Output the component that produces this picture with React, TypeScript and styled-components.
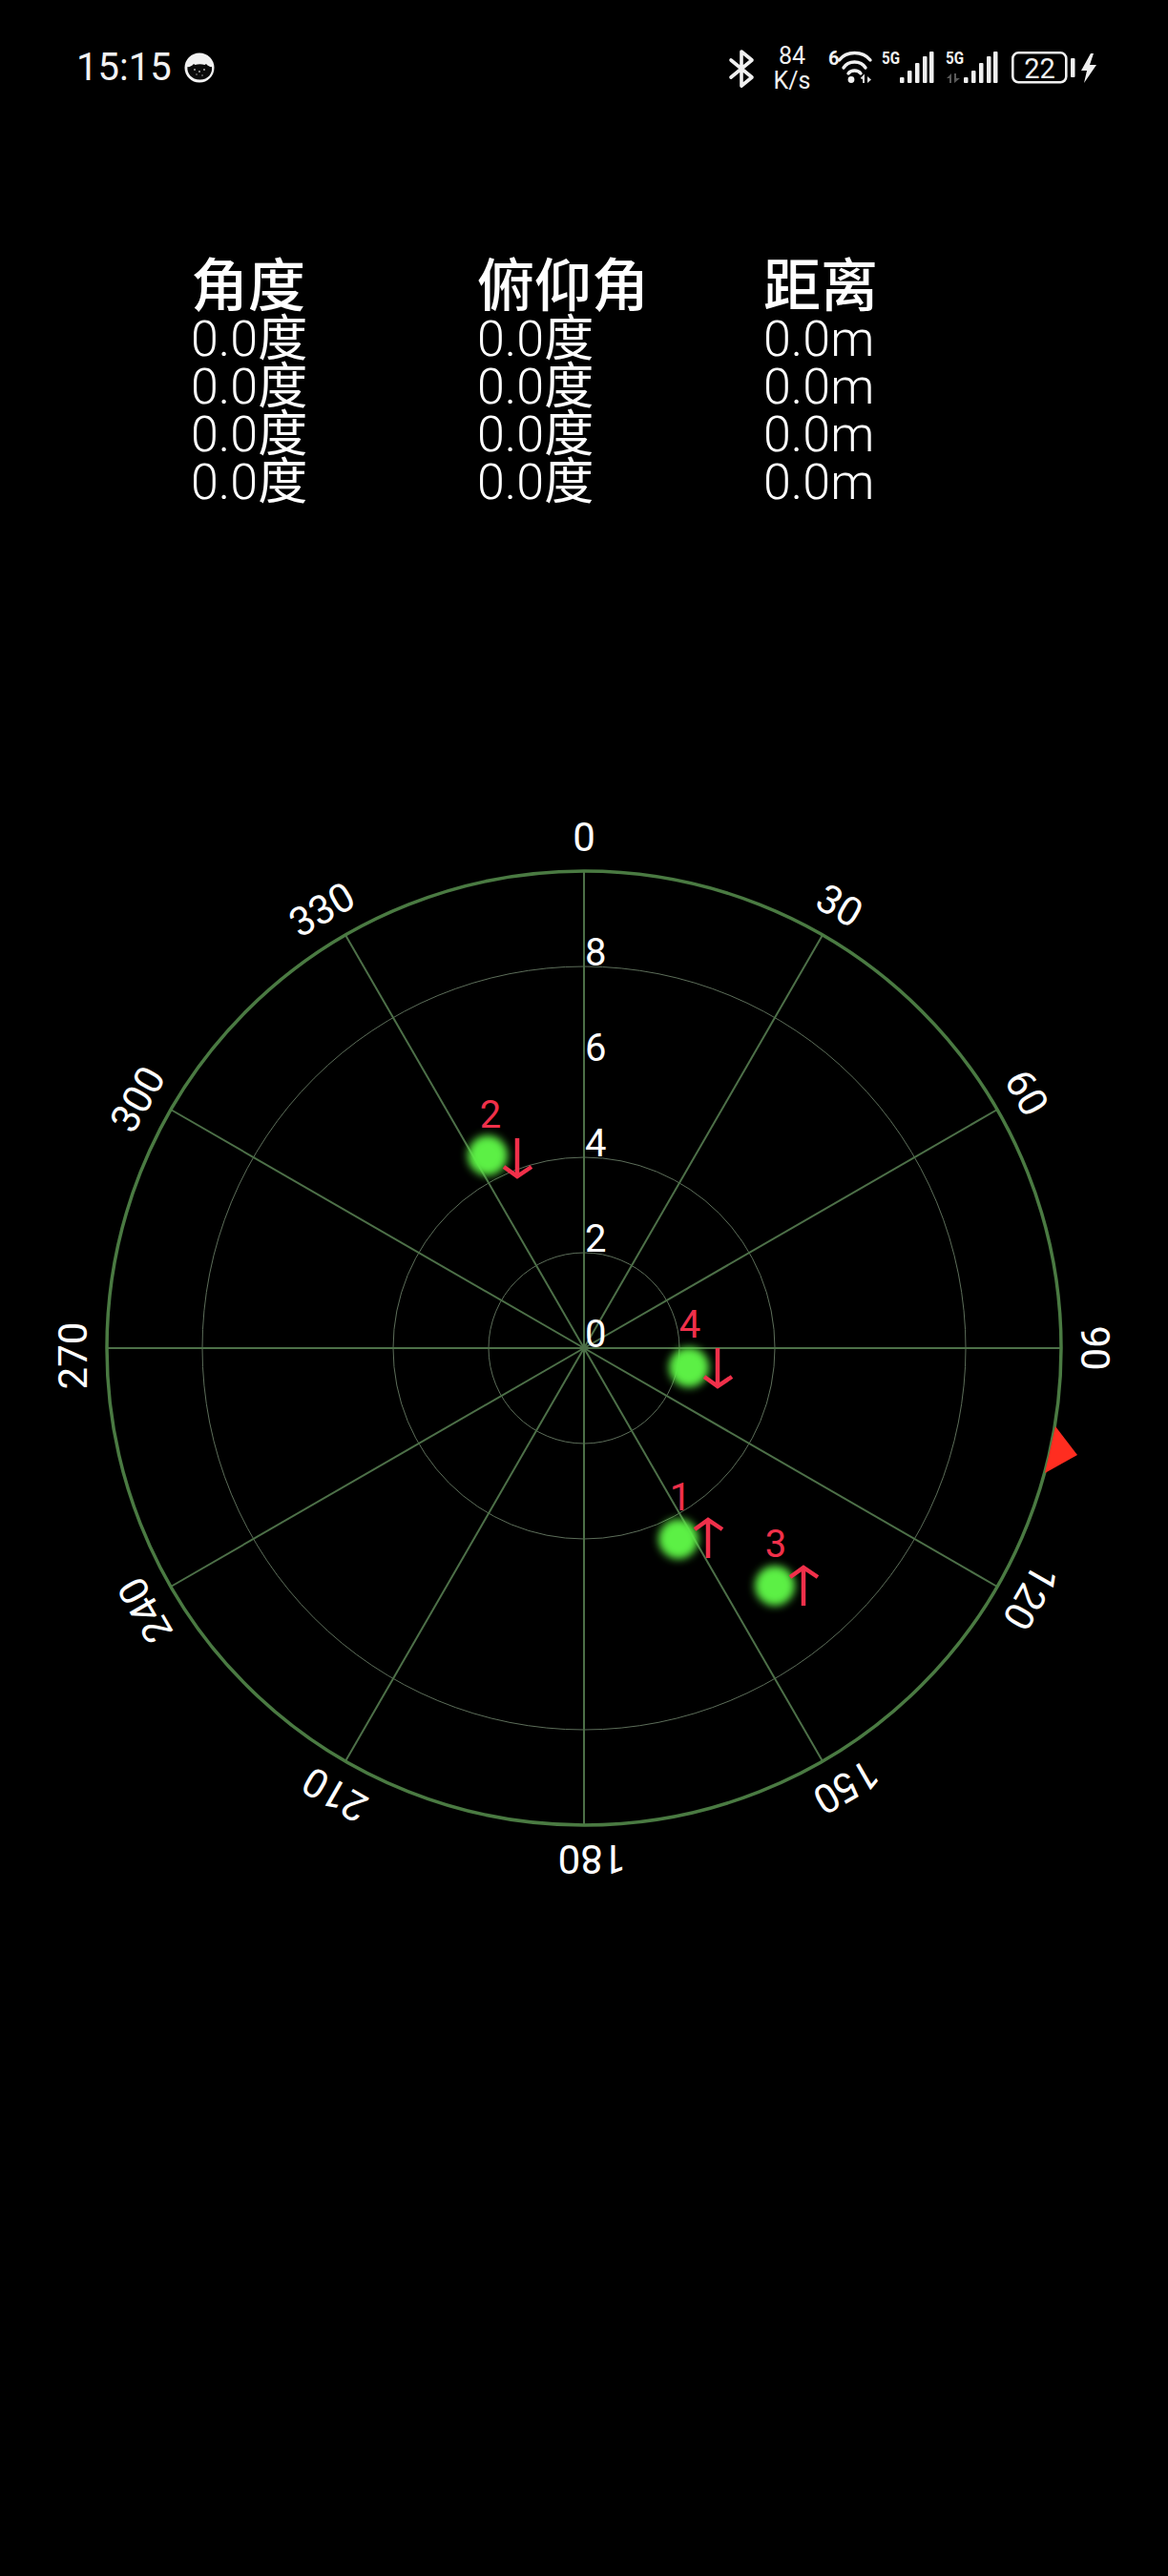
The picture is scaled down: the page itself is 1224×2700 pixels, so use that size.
import { FC } from "react";
import styled, { createGlobalStyle } from "styled-components";

const GlobalStyle = createGlobalStyle`
  html, body {
    margin: 0;
    background: #000000;
  }
`;

const Page = styled.div`
  width: 1224px;
  height: 2700px;
  overflow: hidden;
  background: #000000;
  color: #ffffff;
  font-family: Roboto, "Noto Sans CJK SC", sans-serif;
`;

const StatusBar = styled.div`
  height: 142px;
  padding: 0 74px 0 80px;
  box-sizing: border-box;
  display: flex;
  flex-direction: row;
  justify-content: space-between;
  align-items: flex-start;
`;

const StatusLeft = styled.div`
  display: flex;
  align-items: center;
  gap: 13px;
  height: 142px;
`;

const Time = styled.span`
  font-size: 40px;
  line-height: 142px;
  color: #f2f2f2;
`;

const StatusRight = styled.div`
  display: flex;
  align-items: flex-start;
  padding-top: 46px;
`;

const Speed = styled.div`
  width: 52px;
  margin: 0 0 0 14px;
  display: flex;
  flex-direction: column;
  align-items: center;
  font-size: 25px;
  line-height: 26px;
  color: #f0f0f0;
`;

const StatusIcon = styled.svg<{ $gap?: number; $top?: number }>`
  display: block;
  overflow: visible;
  margin-left: ${(props) => (props.$gap ?? 0) + "px"};
  margin-top: ${(props) => (props.$top ?? 0) + "px"};
`;

const Table = styled.div`
  display: grid;
  grid-template-columns: repeat(3, 300px);
  padding: 126px 0 0 200px;
`;

const Column = styled.div`
  display: flex;
  flex-direction: column;
`;

const Heading = styled.span`
  font-size: 60px;
  line-height: 66px;
  font-weight: 500;
  margin-bottom: -3px;
`;

const Cell = styled.span`
  font-size: 52px;
  line-height: 50px;
  font-weight: 300;
  white-space: nowrap;
`;

const Unit = styled.span`
  font-weight: 400;
`;

const Radar = styled.svg`
  display: block;
  margin-top: 310px;
`;

const AngleLabel = styled.text`
  font-family: Roboto, sans-serif;
  font-size: 42px;
  fill: #ffffff;
  text-anchor: middle;
`;

const RangeLabel = styled.text`
  font-family: Roboto, sans-serif;
  font-size: 40px;
  fill: #ffffff;
`;

const TargetLabel = styled.text`
  font-family: Roboto, sans-serif;
  font-size: 40px;
  fill: #f0304a;
  text-anchor: middle;
`;

const CX = 612;
const CY = 1412;

const angles = [0, 30, 60, 90, 120, 150, 180, 210, 240, 270, 300, 330];
const rings = [100, 200, 400];
const ranges = [8, 6, 4, 2, 0];

const targets = [
  { id: 1, x: 711, y: 1612, labelX: 713, labelY: 1582, arrowX: 742, arrowY: 1632, up: true },
  { id: 2, x: 511, y: 1210, labelX: 514, labelY: 1181, arrowX: 542, arrowY: 1192, up: false },
  { id: 3, x: 812, y: 1661, labelX: 813, labelY: 1631, arrowX: 842, arrowY: 1682, up: true },
  { id: 4, x: 722, y: 1432, labelX: 723, labelY: 1401, arrowX: 752, arrowY: 1412, up: false },
];

const rows = [0, 1, 2, 3];

const bars = [
  { x: 19, h: 6 },
  { x: 27, h: 13 },
  { x: 35, h: 21 },
  { x: 43, h: 28 },
  { x: 50, h: 33 },
];

const CatBadge: FC = () => (
  <StatusIcon width="32" height="32" viewBox="0 0 32 32">
    <circle cx="16" cy="16" r="15.5" fill="#f2f2f2" />
    <path
      d="M3.5 15c2 .5 3.5-.5 5-1.5l1.5-1.5 1.5 1c3 -1 7-1 10 0l1.500-1 1.500 1.500c1.500 1 3 2 4.500 1.500 1 7-4 13.500-12.500 13.500S2.500 22 3.500 15z"
      fill="#0a0a0a"
    />
    <circle cx="11" cy="18" r="0.9" fill="#bbbbbb" />
    <circle cx="16" cy="20" r="0.9" fill="#bbbbbb" />
    <circle cx="21" cy="18" r="0.9" fill="#bbbbbb" />
    <circle cx="13" cy="23" r="0.8" fill="#999999" />
    <circle cx="19" cy="24" r="0.8" fill="#999999" />
  </StatusIcon>
);

const Bluetooth: FC = () => (
  <StatusIcon width="26" height="40" viewBox="0 0 26 40" $top={6}>
    <path
      d="M2 11 L24 29 L13 38 V2 L24 11 L2 29"
      fill="none"
      stroke="#f0f0f0"
      strokeWidth="3.6"
      strokeLinejoin="round"
      strokeLinecap="round"
    />
  </StatusIcon>
);

const Wifi: FC = () => (
  <StatusIcon width="49" height="36" viewBox="0 0 49 36" $gap={11} $top={7}>
    <text x="1" y="15" fontFamily="Roboto, sans-serif" fontSize="20" fontWeight="700" fill="#f0f0f0">
      6
    </text>
    <g fill="none" stroke="#f0f0f0" strokeWidth="3.4" strokeLinecap="round">
      <path d="M12.500 10 C20 0 37 0 45 10" />
      <path d="M17 18 C22 10 35 10 40 18" />
      <path d="M22 24 C25 20 32 20 35 24" />
    </g>
    <circle cx="25" cy="30.500" r="3.4" fill="#f0f0f0" />
    <path d="M38 34 V27 L35.500 29.500" fill="none" stroke="#e0e0e0" strokeWidth="2" />
    <path d="M42 27 V34 L46 30.500 Z" fill="#e0e0e0" />
  </StatusIcon>
);

const Signal: FC<{ gap: number; dim?: boolean }> = ({ gap, dim }) => (
  <StatusIcon width="55" height="35" viewBox="0 0 55 35" $gap={gap} $top={7}>
    <text
      x="0"
      y="14"
      fontFamily="Roboto, sans-serif"
      fontSize="18"
      fontWeight="700"
      fill="#f0f0f0"
      textLength="19"
      lengthAdjust="spacingAndGlyphs"
    >
      5G
    </text>
    {dim && (
      <g fill="#5a5a5a">
        <path d="M1 29 L6 24 V34 H4 V29 Z" />
        <path d="M9 24 H11 V29 H15 L9 34 Z" />
      </g>
    )}
    {bars.map((bar) => (
      <rect key={bar.x} x={bar.x} y={34 - bar.h} width="4.5" height={bar.h} rx="1" fill="#f0f0f0" />
    ))}
  </StatusIcon>
);

const Battery: FC = () => (
  <StatusIcon width="90" height="36" viewBox="0 0 90 36" $gap={14} $top={8}>
    <rect x="1.300" y="1.300" width="56" height="31" rx="6" fill="none" stroke="#f0f0f0" strokeWidth="2.600" />
    <text x="29.500" y="28" fontFamily="Roboto, sans-serif" fontSize="29" fill="#f0f0f0" textAnchor="middle">
      22
    </text>
    <rect x="62" y="7" width="4.500" height="20" rx="1" fill="#f0f0f0" />
    <path d="M83 2 L73 20 H79 L76 33 L89 14 H82 L86 2 Z" fill="#f0f0f0" />
  </StatusIcon>
);

const App: FC = () => {
  return (
    <Page>
      <GlobalStyle />
      <StatusBar>
        <StatusLeft>
          <Time>15:15</Time>
          <CatBadge />
        </StatusLeft>
        <StatusRight>
          <Bluetooth />
          <Speed>
            <span>84</span>
            <span>K/s</span>
          </Speed>
          <Wifi />
          <Signal gap={8} />
          <Signal gap={12} dim />
          <Battery />
        </StatusRight>
      </StatusBar>

      <Table>
        <Column>
          <Heading>角度</Heading>
          {rows.map((row) => (
            <Cell key={row}>
              0.0<Unit>度</Unit>
            </Cell>
          ))}
        </Column>
        <Column>
          <Heading>俯仰角</Heading>
          {rows.map((row) => (
            <Cell key={row}>
              0.0<Unit>度</Unit>
            </Cell>
          ))}
        </Column>
        <Column>
          <Heading>距离</Heading>
          {rows.map((row) => (
            <Cell key={row}>0.0m</Cell>
          ))}
        </Column>
      </Table>

      <Radar width="1224" height="1160" viewBox="0 840 1224 1160">
        <defs>
          <filter id="glow" x="-60%" y="-60%" width="220%" height="220%">
            <feGaussianBlur stdDeviation="4.5" />
          </filter>
        </defs>

        {rings.map((r) => (
          <circle key={r} cx={CX} cy={CY} r={r} fill="none" stroke="#5d6e5a" strokeWidth="1" />
        ))}
        {angles.map((a) => (
          <line
            key={a}
            x1={CX}
            y1={CY}
            x2={CX}
            y2={CY - 500}
            stroke="#4d7048"
            strokeWidth="2"
            transform={`rotate(${a} ${CX} ${CY})`}
          />
        ))}
        <circle cx={CX} cy={CY} r="500" fill="none" stroke="#4a7a42" strokeWidth="3.500" />

        {angles.map((a) => (
          <AngleLabel key={a} x={a >= 100 ? CX - 8 : CX} y={CY - 521} transform={`rotate(${a} ${CX} ${CY})`}>
            {a}
          </AngleLabel>
        ))}
        {ranges.map((n) => (
          <RangeLabel key={n} x={CX + 1} y={CY - n * 50 - 1}>
            {n}
          </RangeLabel>
        ))}

        <polygon points="1106,1494 1129,1524 1095,1543" fill="#ff2d20" />

        {targets.map((t) => (
          <g key={t.id}>
            <circle cx={t.x} cy={t.y} r="21" fill="#5cf044" filter="url(#glow)" />
            <TargetLabel x={t.labelX} y={t.labelY}>
              {t.id}
            </TargetLabel>
            <path
              d={
                t.up
                  ? `M${t.arrowX} ${t.arrowY} V${t.arrowY - 40} M${t.arrowX - 14} ${t.arrowY - 30} L${t.arrowX} ${t.arrowY - 40} L${t.arrowX + 15} ${t.arrowY - 30}`
                  : `M${t.arrowX} ${t.arrowY} V${t.arrowY + 40} M${t.arrowX - 14} ${t.arrowY + 30} L${t.arrowX} ${t.arrowY + 40} L${t.arrowX + 15} ${t.arrowY + 30}`
              }
              fill="none"
              stroke="#f0304a"
              strokeWidth="4.500"
            />
          </g>
        ))}
      </Radar>
    </Page>
  );
};

export default App;
